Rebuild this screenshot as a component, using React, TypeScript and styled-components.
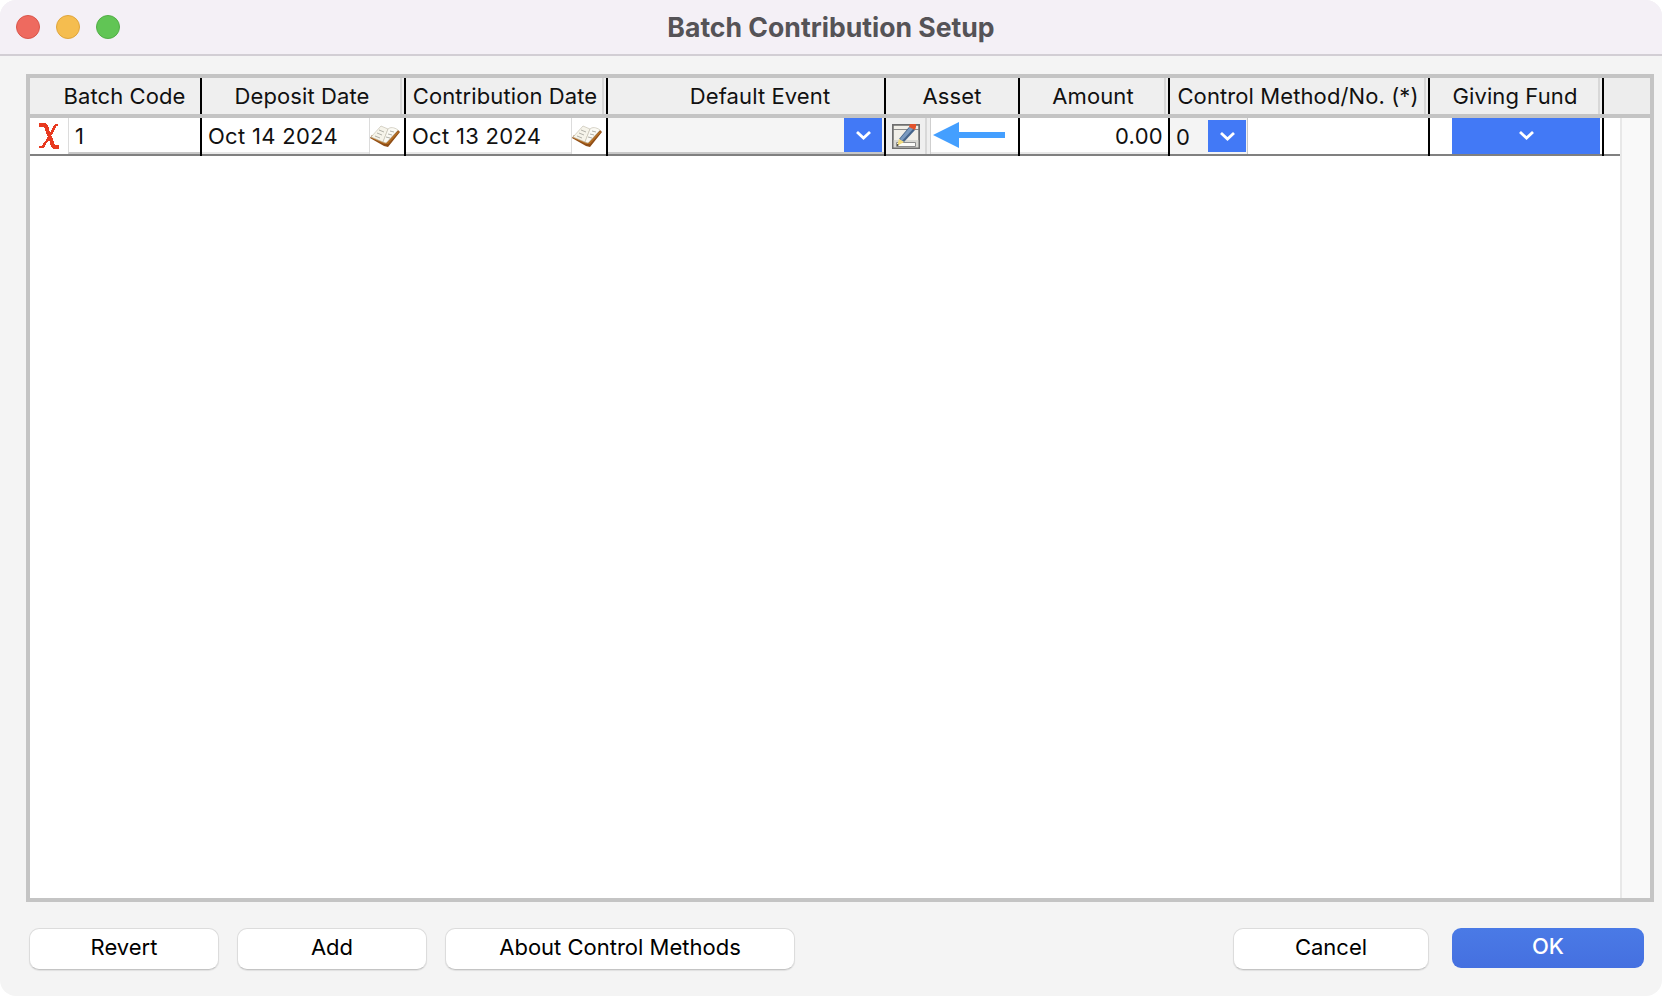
import React from 'react';
import styled, { createGlobalStyle } from 'styled-components';

const GlobalStyle = createGlobalStyle`
  html, body {
    margin: 0;
    padding: 0;
    background: #fff;
  }
  * {
    box-sizing: border-box;
  }
`;

const COLUMNS = '172px 204px 202px 278px 134px 150px 260px 174px';

const Window = styled.div`
  width: 1662px;
  height: 996px;
  display: flex;
  flex-direction: column;
  background: #f4f4f4;
  border-radius: 16px;
  overflow: hidden;
  font-family: Inter, 'Liberation Sans', sans-serif;
  font-size: 22px;
  color: #111;
`;

const TitleBar = styled.div`
  height: 56px;
  flex: none;
  display: flex;
  align-items: center;
  position: relative;
  padding-left: 16px;
  gap: 16px;
  background: #f4f0f6;
  border-bottom: 2px solid #d2ced4;
`;

const Light = styled.span<{ $color: string; $edge: string }>`
  width: 24px;
  height: 24px;
  border-radius: 50%;
  background: ${({ $color }) => $color};
  border: 1px solid ${({ $edge }) => $edge};
`;

const Title = styled.div`
  position: absolute;
  left: 0;
  right: 0;
  top: 10px;
  text-align: center;
  font-size: 26.6px;
  line-height: 34px;
  font-weight: 700;
  color: #555357;
`;

const Body = styled.div`
  flex: 1;
  display: flex;
  flex-direction: column;
  padding: 18px 8px 0 26px;
`;

const Frame = styled.div`
  height: 828px;
  display: flex;
  flex-direction: column;
  border: 4px solid #c4c4c4;
  background: #fff;
`;

const HeaderRow = styled.div`
  height: 40px;
  flex: none;
  display: grid;
  grid-template-columns: ${COLUMNS} 1fr;
  background: #efefef;
  border-bottom: 4px solid #c4c4c4;
`;

const HeaderCell = styled.div<{ $grip?: boolean; $pad?: number }>`
  display: flex;
  align-items: center;
  justify-content: center;
  padding-left: ${({ $pad }) => $pad ?? 0}px;
  padding-right: ${({ $grip }) => ($grip ? 2 : 0)}px;
  line-height: 36px;
  letter-spacing: 0.1px;
  white-space: nowrap;
  border-right: 2px solid #000;
  box-shadow: ${({ $grip }) => ($grip ? 'inset -2px 0 0 #efefef, inset -4px 0 0 #d8d8d8' : 'none')};
`;

const HeaderFill = styled.div`
  background: #ededed;
`;

const Content = styled.div`
  flex: 1;
  display: flex;
`;

const Sheet = styled.div`
  width: 1590px;
`;

const Row = styled.div`
  height: 38px;
  display: grid;
  grid-template-columns: ${COLUMNS};
  border-bottom: 2px solid #808080;
`;

const Cell = styled.div`
  display: flex;
  height: 38px;
  margin-bottom: -2px;
  padding-bottom: 2px;
  border-right: 2px solid #000;
  min-width: 0;
`;

const RemoveSlot = styled.div`
  width: 38px;
  flex: none;
  display: flex;
  align-items: center;
  justify-content: center;
`;

const Field = styled.div<{ $align?: string; $plain?: boolean }>`
  flex: 1;
  min-width: 0;
  display: flex;
  align-items: center;
  justify-content: ${({ $align }) => $align ?? 'flex-start'};
  padding: 2px 5px 0 6px;
  letter-spacing: 0.3px;
  background: #fff;
  border-left: ${({ $plain }) => ($plain ? 'none' : '1px solid #dcdcdc')};
  border-bottom: 2px solid ${({ $plain }) => ($plain ? '#e8e8e8' : '#c8c8c8')};
  white-space: nowrap;
`;

const DateSlot = styled.div`
  width: 35px;
  flex: none;
  display: flex;
  align-items: center;
  background: #fff;
  border-left: 1px solid #dcdcdc;
`;

const EventBox = styled.div`
  flex: 1;
  display: flex;
  justify-content: flex-end;
  align-items: flex-start;
  background: #f5f5f5;
  border-bottom: 2px solid #c8c8c8;
  padding-right: 2px;
`;

const DropButton = styled.div<{ $width: number; $height: number }>`
  width: ${({ $width }) => $width}px;
  height: ${({ $height }) => $height}px;
  flex: none;
  display: flex;
  align-items: center;
  justify-content: center;
  background: #4279f6;
`;

const FundButton = styled(DropButton)`
  padding-bottom: 2px;
`;

const AssetButton = styled.div`
  width: 45px;
  flex: none;
  display: flex;
  align-items: center;
  padding-left: 6px;
  background: #efefef;
  border-right: 1px solid #cfcfcf;
  box-shadow: inset -3px 0 0 #efefef, inset -5px 0 0 #d8d8d8;
`;

const ArrowSlot = styled.div`
  flex: 1;
  display: flex;
  align-items: center;
  padding-left: 2px;
  background: #fff;
  border-bottom: 2px solid #e8e8e8;
`;

const MethodBox = styled.div`
  width: 78px;
  flex: none;
  display: flex;
  align-items: center;
  justify-content: space-between;
  padding: 1px 1px 0 6px;
  background: #f4f4f4;
  border-right: 1px solid #c8c8c8;
`;

const MethodDrop = styled(DropButton)`
  margin-top: -1px;
`;

const MethodInput = styled.div`
  flex: 1;
  background: #fff;
`;

const FundCell = styled(Cell)`
  justify-content: flex-end;
  padding-right: 2px;
  padding-bottom: 0;
`;

const ScrollTrack = styled.div`
  flex: 1;
  background: #f9f9f9;
  border-left: 2px solid #e8e8e8;
`;

const Footer = styled.div`
  display: flex;
  align-items: flex-start;
  padding: 26px 10px 0 3px;
`;

const LeftButtons = styled.div`
  display: flex;
  gap: 18px;
`;

const RightButtons = styled.div`
  margin-left: auto;
  display: flex;
  align-items: flex-start;
  gap: 23px;
`;

const Button = styled.button<{ $width: number }>`
  width: ${({ $width }) => $width}px;
  height: 42px;
  padding: 0 0 5px;
  font: inherit;
  color: #000;
  background: #fff;
  border: 1px solid #dcdcdc;
  border-bottom-color: #c4c4c4;
  border-radius: 10px;
  box-shadow: 0 1px 1px rgba(0, 0, 0, 0.08);
`;

const DefaultButton = styled.button`
  width: 192px;
  height: 40px;
  padding: 0 0 4px;
  font: inherit;
  font-weight: 500;
  color: #fff;
  background: linear-gradient(#4a7ae6, #4570e0);
  border: none;
  border-radius: 9px;
`;

const Chevron = () => (
  <svg width="17" height="10" viewBox="0 0 17 10" fill="none">
    <path d="M2 2l6.500 6 6.500-6" stroke="#fff" strokeWidth="2.800" />
  </svg>
);

const RemoveIcon = () => (
  <svg width="20" height="26" viewBox="0 0 20 26" fill="none" stroke="#e8391f" shapeRendering="crispEdges">
    <path d="M0 2h6l1.500 2 1 4 2 5 2 5 1 3.500 1.500 2.500h5" strokeWidth="4" />
    <path d="M19 2h-2l-2 3-2 4-2.500 4-2 4-3 4-1.500 3H0" strokeWidth="2.500" />
  </svg>
);

const BookIcon = () => (
  <svg width="30" height="22" viewBox="0 0 30 22">
    <path d="M0 13l14 8 4 1L30 7l-2-2-11 12-3 0L2 10z" fill="#8f4d16" />
    <path d="M1 13l13 6 4 0L29 7l-1-1-11 11-3 0L2 11z" fill="#b56f24" />
    <path d="M1 12L11 1l7 3-5 13z" fill="#f6f4ea" stroke="#bdb9a8" strokeWidth="0.600" />
    <path d="M18 4c2-2 6-2 10 1L16 18l-3-1z" fill="#fbfaf4" stroke="#bdb9a8" strokeWidth="0.600" />
    <path d="M9 5l5 2M7 8l5 2M5 11l5 2M20 6l4 1M18 9l4 1M16 12l4 1" stroke="#a9a9a2" strokeWidth="0.900" />
  </svg>
);

const PencilIcon = () => (
  <svg width="28" height="25" viewBox="0 0 28 25" fill="none">
    <rect x="0.750" y="0.750" width="26.500" height="23.500" fill="#f1efe8" stroke="#6e6e6e" strokeWidth="1.500" />
    <path d="M1 5.500h26" stroke="#8a8a8a" strokeWidth="1" />
    <path d="M1 16h26v8H1z" fill="#d9d9d4" />
    <path d="M4.500 18.500h19v4h-19z" fill="#fbfbf8" stroke="#8c8c8c" strokeWidth="1" />
    <rect x="0.750" y="0.750" width="26.500" height="23.500" stroke="#6e6e6e" strokeWidth="1.500" />
    <path d="M17 3l6 3-11 12-5-3z" fill="#46648a" />
    <path d="M18 3l3 2-11 12-2-2z" fill="#7a9ac0" />
    <path d="M18 0h6v3l-1 3-6-3z" fill="#e2532c" />
    <path d="M7 15l5 3-7 4z" fill="#f2dc7c" />
    <path d="M5 20l2 1-2 1z" fill="#222" />
  </svg>
);

const ArrowIcon = () => (
  <svg width="72" height="26" viewBox="0 0 72 26">
    <path d="M0 13L26 0v10h46v6H26v10z" fill="#449fff" />
  </svg>
);

const App = () => {
  return (
    <>
      <GlobalStyle />
      <Window>
        <TitleBar>
          <Light $color="#ee6a5f" $edge="#d9564b" />
          <Light $color="#f5bd4f" $edge="#dfa53c" />
          <Light $color="#61c555" $edge="#52ad47" />
          <Title>Batch Contribution Setup</Title>
        </TitleBar>
        <Body>
          <Frame>
            <HeaderRow>
              <HeaderCell $pad={19}>Batch Code</HeaderCell>
              <HeaderCell $grip>Deposit Date</HeaderCell>
              <HeaderCell $grip>Contribution Date</HeaderCell>
              <HeaderCell $pad={28}>Default Event</HeaderCell>
              <HeaderCell>Asset</HeaderCell>
              <HeaderCell $grip>Amount</HeaderCell>
              <HeaderCell $grip>Control Method/No. (*)</HeaderCell>
              <HeaderCell $grip>Giving Fund</HeaderCell>
              <HeaderFill />
            </HeaderRow>
            <Content>
              <Sheet>
                <Row>
                  <Cell>
                    <RemoveSlot>
                      <RemoveIcon />
                    </RemoveSlot>
                    <Field>1</Field>
                  </Cell>
                  <Cell>
                    <Field $plain>Oct 14 2024</Field>
                    <DateSlot>
                      <BookIcon />
                    </DateSlot>
                  </Cell>
                  <Cell>
                    <Field $plain>Oct 13 2024</Field>
                    <DateSlot>
                      <BookIcon />
                    </DateSlot>
                  </Cell>
                  <Cell>
                    <EventBox>
                      <DropButton $width={38} $height={34}>
                        <Chevron />
                      </DropButton>
                    </EventBox>
                  </Cell>
                  <Cell>
                    <AssetButton>
                      <PencilIcon />
                    </AssetButton>
                    <ArrowSlot>
                      <ArrowIcon />
                    </ArrowSlot>
                  </Cell>
                  <Cell>
                    <Field $align="flex-end" $plain>0.00</Field>
                  </Cell>
                  <Cell>
                    <MethodBox>
                      0
                      <MethodDrop $width={38} $height={32}>
                        <Chevron />
                      </MethodDrop>
                    </MethodBox>
                    <MethodInput />
                  </Cell>
                  <FundCell>
                    <FundButton $width={148} $height={36}>
                      <Chevron />
                    </FundButton>
                  </FundCell>
                </Row>
              </Sheet>
              <ScrollTrack />
            </Content>
          </Frame>
          <Footer>
            <LeftButtons>
              <Button $width={190}>Revert</Button>
              <Button $width={190}>Add</Button>
              <Button $width={350}>About Control Methods</Button>
            </LeftButtons>
            <RightButtons>
              <Button $width={196}>Cancel</Button>
              <DefaultButton>OK</DefaultButton>
            </RightButtons>
          </Footer>
        </Body>
      </Window>
    </>
  );
};

export default App;
